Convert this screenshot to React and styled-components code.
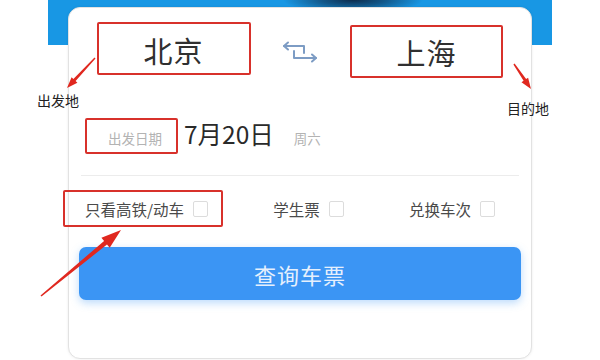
import React from 'react'
import styled, { createGlobalStyle } from 'styled-components'

const Global = createGlobalStyle`
  html, body { margin: 0; padding: 0; background: #fff; }
  body { font-family: "Noto Sans CJK SC", "Noto Sans", sans-serif; }
`

const Page = styled.div`
  position: relative;
  width: 600px;
  height: 360px;
  overflow: hidden;
  background: #fff;
`

const Banner = styled.div`
  margin-left: 48px;
  width: 504px;
  height: 360px;
  box-sizing: border-box;
  padding: 7px 20px 0;
  background:
    radial-gradient(ellipse 70px 13px at 305px 0, #0d2c4c 0%, rgba(13,44,76,0.6) 45%, rgba(22,150,230,0) 100%) no-repeat,
    linear-gradient(#1897e4, #1897e4) 0 0 / 100% 45px no-repeat;
`

const Card = styled.div`
  height: 352px;
  box-sizing: border-box;
  background: #fff;
  border: 1px solid #e2e2e2;
  border-radius: 12px;
  box-shadow: 0 0 3px rgba(0,0,0,0.08);
  padding: 0 10px;
  display: flex;
  flex-direction: column;
`

const CityRow = styled.div`
  margin-top: 14px;
  height: 56px;
  display: flex;
  align-items: center;
  padding: 0 18px;
`

const City = styled.div`
  width: 153px;
  text-align: center;
  font-size: 29px;
  font-weight: 400;
  color: #303030;
  letter-spacing: 1px;
  margin-top: ${p => p.$drop || 0}px;
`

const Swap = styled.div`
  flex: 1;
  display: flex;
  justify-content: center;
  margin-top: 4px;
`

const DateRow = styled.div`
  margin-top: 38px;
  height: 35px;
  display: flex;
  align-items: baseline;
  padding-left: 29px;
`

const Hint = styled.span`
  font-size: 13.5px;
  color: #b3b3b3;
  margin-right: ${p => p.$gap || 0}px;
`

const DateText = styled.span`
  font-size: 24.5px;
  color: #2a2a2a;
  margin-right: 20px;
`

const Divider = styled.div`
  margin: 24px 2px 0;
  height: 1px;
  background: #ececec;
`

const Options = styled.div`
  height: 38px;
  margin-top: 14px;
  display: flex;
  align-items: center;
  justify-content: space-between;
  padding: 0 26px 0 6px;
`

const Option = styled.label`
  display: flex;
  align-items: center;
  font-size: 15.5px;
  color: #4a4a4a;
`

const Box = styled.span`
  width: 13px;
  height: 14px;
  margin-left: 9px;
  border: 1px solid #dcdcdc;
  border-radius: 2px;
  background: #fff;
`

const SearchButton = styled.button`
  margin-top: 19px;
  height: 53px;
  border: none;
  border-radius: 7px;
  background: #3b95f4;
  box-shadow: 0 3px 8px rgba(59,149,244,0.35);
  color: #e6f0fd;
  font-family: inherit;
  font-size: 22px;
  letter-spacing: 1px;
`

const RedBox = styled.div`
  position: absolute;
  left: ${p => p.$x}px;
  top: ${p => p.$y}px;
  width: ${p => p.$w}px;
  height: ${p => p.$h}px;
  box-sizing: border-box;
  border: 2.5px solid #d8312b;
  border-radius: 2px;
  pointer-events: none;
`

const Note = styled.div`
  position: absolute;
  left: ${p => p.$x}px;
  top: ${p => p.$y}px;
  font-size: 14px;
  color: #222;
  line-height: 16px;
`

const Overlay = styled.svg`
  position: absolute;
  left: 0;
  top: 0;
  pointer-events: none;
`

// tapered arrow polygon from (x1,y1) to tip (x2,y2)
function arrowPoints(x1, y1, x2, y2, tail, shaft, headLen, headW) {
  const dx = x2 - x1, dy = y2 - y1
  const len = Math.hypot(dx, dy)
  const ux = dx / len, uy = dy / len
  const nx = -uy, ny = ux
  const bx = x2 - ux * headLen, by = y2 - uy * headLen
  const p = (x, y) => `${x.toFixed(1)},${y.toFixed(1)}`
  return [
    p(x1 + nx * tail / 2, y1 + ny * tail / 2),
    p(bx + nx * shaft / 2, by + ny * shaft / 2),
    p(bx + nx * headW / 2, by + ny * headW / 2),
    p(x2, y2),
    p(bx - nx * headW / 2, by - ny * headW / 2),
    p(bx - nx * shaft / 2, by - ny * shaft / 2),
    p(x1 - nx * tail / 2, y1 - ny * tail / 2),
  ].join(' ')
}

function SwapIcon() {
  return (
    <svg width="40" height="22" viewBox="0 0 40 22" fill="none" stroke="#7d9cc4" strokeWidth="2" strokeLinecap="round" strokeLinejoin="round">
      <path d="M4 5h20v7" />
      <path d="M8 1.5L4 5l4 3.5" />
      <path d="M14 10v7h22" />
      <path d="M32 13.5l4 3.5-4 3.5" />
    </svg>
  )
}

export default function App() {
  return (
    <Page>
      <Global />
      <Banner>
        <Card>
          <CityRow>
            <City>北京</City>
            <Swap><SwapIcon /></Swap>
            <City $drop={4}>上海</City>
          </CityRow>
          <DateRow>
            <Hint $gap={22}>出发日期</Hint>
            <DateText>7月20日</DateText>
            <Hint>周六</Hint>
          </DateRow>
          <Divider />
          <Options>
            <Option>只看高铁/动车<Box /></Option>
            <Option>学生票<Box /></Option>
            <Option>兑换车次<Box /></Option>
          </Options>
          <SearchButton>查询车票</SearchButton>
        </Card>
      </Banner>

      <RedBox $x={97} $y={22} $w={154} $h={53} />
      <RedBox $x={350} $y={25} $w={153} $h={53} />
      <RedBox $x={85} $y={118} $w={93} $h={36} />
      <RedBox $x={63} $y={190} $w={160} $h={37} />

      <Overlay width="600" height="360" viewBox="0 0 600 360">
        <polygon fill="#e0281f" points={arrowPoints(95, 58, 67, 88, 1.5, 3, 11, 8)} />
        <polygon fill="#e0281f" points={arrowPoints(514, 64, 531, 89, 1.5, 3, 11, 8)} />
        <polygon fill="#e0281f" points={arrowPoints(41, 296, 121, 230, 1.5, 4.5, 20, 13)} />
      </Overlay>

      <Note $x={37} $y={92}>出发地</Note>
      <Note $x={507} $y={100}>目的地</Note>
    </Page>
  )
}
